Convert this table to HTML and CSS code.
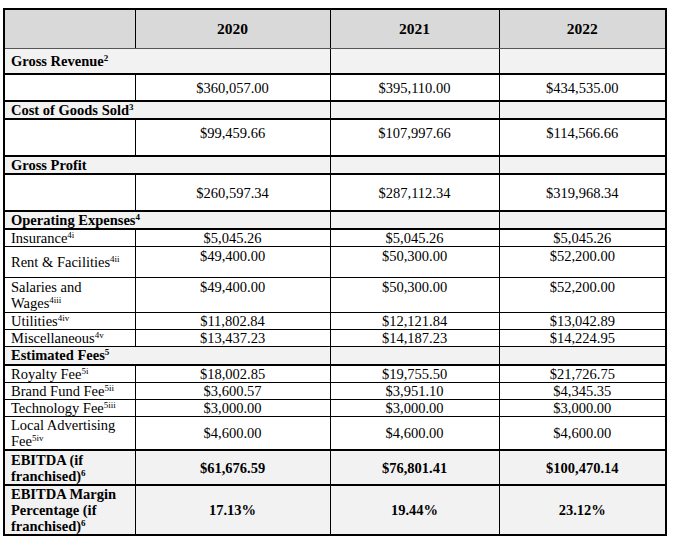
FILE: index.html
```html
<!DOCTYPE html>
<html>
<head>
<meta charset="utf-8">
<link rel="stylesheet" href="styles.css">
</head>
<body>
<table class="fin">
  <colgroup><col class="c1"><col class="c2"><col class="c3"><col class="c4"></colgroup>
  <thead>
    <tr class="hdr h39"><th></th><th>2020</th><th>2021</th><th>2022</th></tr>
  </thead>
  <tbody>
    <tr class="band h26 tb"><td colspan="2" class="lbl">Gross Revenue<sup>2</sup></td><td></td><td></td></tr>
    <tr class="h27 tb"><td></td><td>$360,057.00</td><td>$395,110.00</td><td>$434,535.00</td></tr>
    <tr class="band h16 tb"><td colspan="2" class="lbl">Cost of Goods Sold<sup>3</sup></td><td></td><td></td></tr>
    <tr class="h37 tb vtop"><td></td><td>$99,459.66</td><td>$107,997.66</td><td>$114,566.66</td></tr>
    <tr class="band h18 tb"><td colspan="2" class="lbl vbot">Gross Profit</td><td></td><td></td></tr>
    <tr class="h37 tb"><td></td><td>$260,597.34</td><td>$287,112.34</td><td>$319,968.34</td></tr>
    <tr class="band h18 tb"><td colspan="2" class="lbl">Operating Expenses<sup>4</sup></td><td></td><td></td></tr>
    <tr class="h16 sub"><td class="lbl">Insurance<sup>4i</sup></td><td>$5,045.26</td><td>$5,045.26</td><td>$5,045.26</td></tr>
    <tr class="h31 sub vtop"><td class="lbl vmid">Rent &amp; Facilities<sup>4ii</sup></td><td>$49,400.00</td><td>$50,300.00</td><td>$52,200.00</td></tr>
    <tr class="h35 sub vtop"><td class="lbl">Salaries and<br>Wages<sup>4iii</sup></td><td>$49,400.00</td><td>$50,300.00</td><td>$52,200.00</td></tr>
    <tr class="h16 sub"><td class="lbl">Utilities<sup>4iv</sup></td><td>$11,802.84</td><td>$12,121.84</td><td>$13,042.89</td></tr>
    <tr class="h17 sub"><td class="lbl">Miscellaneous<sup>4v</sup></td><td>$13,437.23</td><td>$14,187.23</td><td>$14,224.95</td></tr>
    <tr class="band h18 tb"><td colspan="2" class="lbl">Estimated Fees<sup>5</sup></td><td></td><td></td></tr>
    <tr class="h17 sub"><td class="lbl">Royalty Fee<sup>5i</sup></td><td>$18,002.85</td><td>$19,755.50</td><td>$21,726.75</td></tr>
    <tr class="h17 sub"><td class="lbl">Brand Fund Fee<sup>5ii</sup></td><td>$3,600.57</td><td>$3,951.10</td><td>$4,345.35</td></tr>
    <tr class="h17 sub"><td class="lbl">Technology Fee<sup>5iii</sup></td><td>$3,000.00</td><td>$3,000.00</td><td>$3,000.00</td></tr>
    <tr class="h34 tb"><td class="lbl">Local Advertising<br>Fee<sup>5iv</sup></td><td>$4,600.00</td><td>$4,600.00</td><td>$4,600.00</td></tr>
    <tr class="h35 tb total"><td class="lbl">EBITDA (if<br>franchised)<sup>6</sup></td><td>$61,676.59</td><td>$76,801.41</td><td>$100,470.14</td></tr>
    <tr class="h49 tb total"><td class="lbl">EBITDA Margin<br>Percentage (if<br>franchised)<sup>6</sup></td><td>17.13%</td><td>19.44%</td><td>23.12%</td></tr>
  </tbody>
</table>
</body>
</html>
```
FILE: styles.css
```css
html, body {
  margin: 0;
  padding: 0;
  background: #ffffff;
}
body {
  padding: 8px 0 0 3px;
  font-family: "Liberation Serif", "Times New Roman", serif;
  font-size: 14.5px;
  line-height: 16px;
  color: #000000;
}
.fin {
  border-collapse: collapse;
  table-layout: fixed;
  width: 664px;
  border: 2px solid #000000;
}
.c1 { width: 131px; }
.c2 { width: 195px; }
.c3 { width: 169px; }
.c4 { width: 167px; }
.fin th, .fin td {
  border: 1px solid #000000;
  padding: 0;
  text-align: center;
  vertical-align: middle;
  white-space: nowrap;
}
.fin td.lbl {
  text-align: left;
  padding-left: 6px;
  white-space: normal;
}
.hdr th {
  background: #d9d9d9;
  font-weight: bold;
  font-size: 15.5px;
  border-bottom-color: #555555;
}
.band td {
  background: #f2f2f2;
  font-weight: bold;
}
.total td {
  background: #f2f2f2;
  font-weight: bold;
}
.tb td { border-bottom-width: 2px; }
.vtop td { vertical-align: top; padding-top: 1px; }
.h37.vtop td { padding-top: 5px; }
.sub.vtop td { padding-top: 1px; }
.vtop td.vmid { vertical-align: middle; padding-top: 0; }
.fin td.vbot { vertical-align: bottom; }
sup {
  font-size: 9px;
  line-height: 0;
  vertical-align: 5px;
}
.h16 { height: 16px; }
.h17 { height: 17px; }
.h18 { height: 18px; }
.h26 { height: 26px; }
.h27 { height: 27px; }
.h31 { height: 31px; }
.h34 { height: 34px; }
.h35 { height: 35px; }
.h37 { height: 37px; }
.h39 { height: 39px; }
.h49 { height: 49px; }
```
